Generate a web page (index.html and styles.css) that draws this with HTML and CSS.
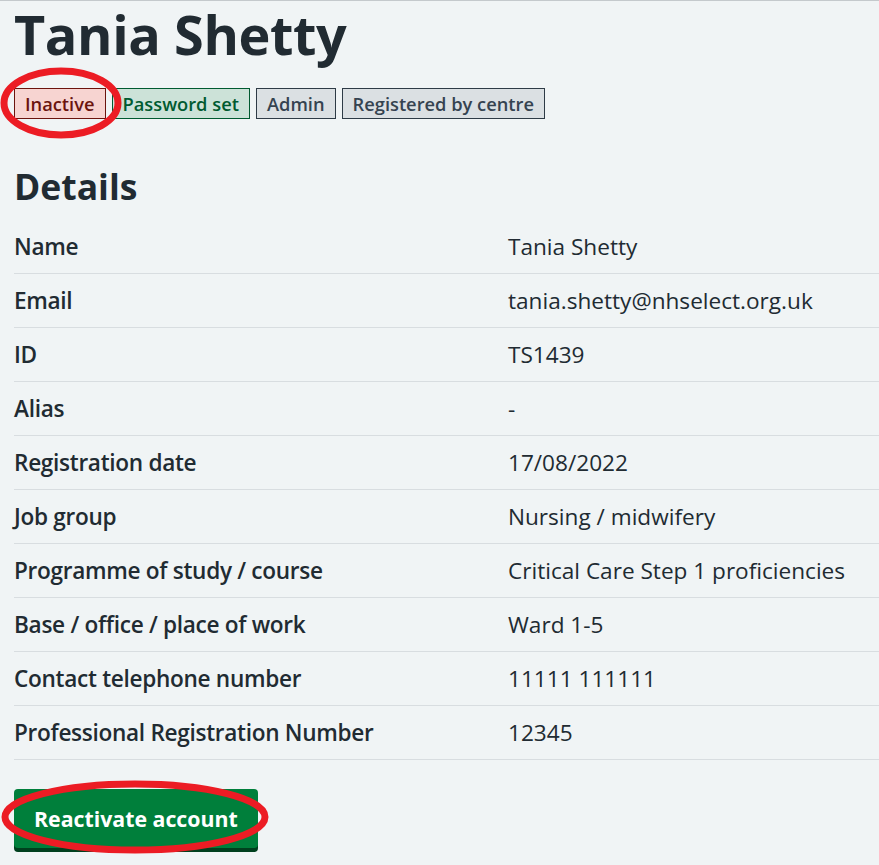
FILE: index.html
```html
<!DOCTYPE html>
<html lang="en">
<head>
<meta charset="utf-8">
<title>Tania Shetty</title>
<link rel="stylesheet" href="styles.css">
</head>
<body>
<main class="page">
  <h1 class="title">Tania Shetty</h1>
  <div class="tags">
    <strong class="tag tag-red">Inactive</strong>
    <strong class="tag tag-green">Password set</strong>
    <strong class="tag tag-grey">Admin</strong>
    <strong class="tag tag-grey">Registered by centre</strong>
  </div>
  <h2 class="heading">Details</h2>
  <dl class="summary">
    <div class="row"><dt>Name</dt><dd>Tania Shetty</dd></div>
    <div class="row"><dt>Email</dt><dd>tania.shetty@nhselect.org.uk</dd></div>
    <div class="row"><dt>ID</dt><dd>TS1439</dd></div>
    <div class="row"><dt>Alias</dt><dd>-</dd></div>
    <div class="row"><dt>Registration date</dt><dd>17/08/2022</dd></div>
    <div class="row"><dt>Job group</dt><dd>Nursing / midwifery</dd></div>
    <div class="row"><dt>Programme of study / course</dt><dd>Critical Care Step 1 proficiencies</dd></div>
    <div class="row"><dt>Base / office / place of work</dt><dd>Ward 1-5</dd></div>
    <div class="row"><dt>Contact telephone number</dt><dd>11111 111111</dd></div>
    <div class="row"><dt>Professional Registration Number</dt><dd>12345</dd></div>
  </dl>
  <button class="button" type="button">Reactivate account</button>
</main>
<svg class="annotations" width="879" height="865" viewBox="0 0 879 865" aria-hidden="true">
  <ellipse cx="61" cy="103" rx="57" ry="32" fill="none" stroke="#ec1c24" stroke-width="7"/>
  <ellipse cx="135" cy="817" rx="130" ry="33" fill="none" stroke="#ec1c24" stroke-width="7"/>
</svg>
</body>
</html>
```
FILE: styles.css
```css
html, body {
  margin: 0;
  padding: 0;
}
body {
  background: #f0f4f5;
  color: #212b32;
  font-family: "Open Sans", "Noto Sans", sans-serif;
  border-top: 1px solid #c4c9cc;
  min-height: 864px;
  position: relative;
}
.page {
  padding: 0 0 0 14px;
}
.title {
  font-size: 54px;
  font-weight: 700;
  line-height: 66px;
  margin: 0;
  letter-spacing: -0.4px;
}
.tags {
  display: flex;
  gap: 6px;
  margin-top: 21px;
}
.tag {
  display: inline-block;
  font-size: 18.3px;
  font-weight: 600;
  line-height: 21px;
  padding: 4px 10px;
  border: 1px solid;
}
.tag-red { background: #f7d4d1; color: #6b140e; border-color: #6b140e; }
.tag-green { background: #cce2d8; color: #005a30; border-color: #005a30; }
.tag-grey { background: #dbe0e3; color: #354350; border-color: #2e3b46; }
.heading {
  font-size: 35.5px;
  font-weight: 700;
  line-height: 46px;
  margin: 44px 0 0;
}
.summary {
  margin: 11px 0 0;
}
.row {
  display: grid;
  grid-template-columns: 494px 1fr;
  border-bottom: 1px solid #d8dde0;
  padding: 10px 0;
}
.row dt, .row dd {
  margin: 0;
  font-size: 22.6px;
  line-height: 33px;
}
.row dt {
  font-weight: 600;
  letter-spacing: -0.3px;
}
.button {
  margin-top: 29px;
  background: #007f3b;
  color: #ffffff;
  border: 0;
  border-radius: 4px;
  box-shadow: 0 4px 0 #00401e;
  font-family: inherit;
  font-size: 21.3px;
  font-weight: 700;
  line-height: 33px;
  padding: 13px 20px;
  cursor: pointer;
}
.annotations {
  position: absolute;
  left: 0;
  top: -1px;
  pointer-events: none;
}
```
